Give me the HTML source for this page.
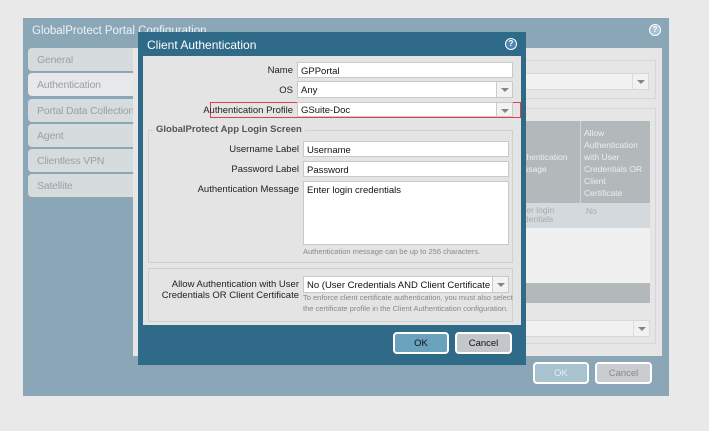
<!DOCTYPE html>
<html><head><style>
*{box-sizing:border-box;margin:0;padding:0}
body{width:709px;height:431px;background:#e9e9e9;position:relative;overflow:hidden;font-family:"Liberation Sans",sans-serif;font-size:9px;color:#222}
.a{position:absolute}
.tab{position:absolute;left:28px;width:106px;height:23px;background:#d6dbde;border-radius:4px 0 0 4px;color:#9aa0a4;font-family:"Liberation Sans",sans-serif;font-size:10.5px;padding:6px 0 0 9px;white-space:nowrap;letter-spacing:-0.2px}
.inp{position:absolute;background:#fff;border:1px solid #c9c9c9;font-size:9.5px;padding:3px 0 0 3px;color:#111;white-space:nowrap;overflow:hidden}
.lbl{position:absolute;text-align:right;font-size:9.5px;color:#222;white-space:nowrap}
.dd{position:absolute;top:0;right:0;width:16px;height:100%;border-left:1px solid #ccc;background:#f2f2f2}
.dd:after{content:"";position:absolute;left:4px;top:6px;border-left:4px solid transparent;border-right:4px solid transparent;border-top:4px solid #7b8890}
.hint{position:absolute;font-size:7.5px;color:#888;line-height:11px;white-space:nowrap}
.btn{position:absolute;height:22px;border:2px solid #fff;border-radius:4px;text-align:center;font-size:9.5px;padding-top:4px}
.help{position:absolute;width:12px;height:12px;border-radius:50%;border:1.5px solid #fff;background:#4d87ad;color:#fff;font-size:8px;font-weight:bold;text-align:center;line-height:9px}
</style></head><body>
<div class="a" style="left:23px;top:18px;width:646px;height:378px;background:#8ba6b6"></div>
<div class="a" style="left:32px;top:25px;color:#eef3f6;font-size:11.5px">GlobalProtect Portal Configuration</div>
<div class="help" style="left:649px;top:24px;background:#a9c1d0">?</div>
<div class="tab" style="top:48px">General</div>
<div class="tab" style="top:73px;background:#e6e8e9;width:108px">Authentication</div>
<div class="tab" style="top:99px">Portal Data Collection</div>
<div class="tab" style="top:124px">Agent</div>
<div class="tab" style="top:149px">Clientless VPN</div>
<div class="tab" style="top:174px">Satellite</div>
<div class="a" style="left:133px;top:48px;width:529px;height:308px;background:#e6e6e6"></div>
<div class="a" style="left:520px;top:60px;width:136px;height:39px;border:1px solid #d6d6d6"></div>
<div class="a" style="left:520px;top:73px;width:129px;height:17px;background:#f1f1f1;border:1px solid #d8d8d8"><div class="dd" style="background:#f1f1f1;border-color:#ddd"></div></div>
<div class="a" style="left:520px;top:108px;width:136px;height:236px;border:1px solid #d6d6d6"></div>
<div class="a" style="left:520px;top:121px;width:130px;height:162px;background:#f0f0f0"></div>
<div class="a" style="left:520px;top:121px;width:130px;height:82px;background:#b3b8bb"></div>
<div class="a" style="left:580px;top:121px;width:1px;height:107px;background:#cfd4d6"></div>
<div class="a" style="left:584px;top:127px;color:#eee;font-size:8.5px;line-height:12px">Allow<br>Authentication<br>with User<br>Credentials OR<br>Client<br>Certificate</div>
<div class="a" style="left:524px;top:151px;color:#eee;font-size:8.5px;line-height:12px">thentication<br>ssage</div>
<div class="a" style="left:520px;top:203px;width:130px;height:25px;background:#d3d9dc"></div>
<div class="a" style="left:524px;top:206px;color:#aaa;font-size:8.5px;line-height:9px">ter login<br>dentials</div>
<div class="a" style="left:586px;top:206px;color:#aaa;font-size:8.5px">No</div>
<div class="a" style="left:520px;top:283px;width:130px;height:20px;background:#b3b8bb"></div>
<div class="a" style="left:520px;top:320px;width:130px;height:17px;background:#f1f1f1;border:1px solid #d8d8d8"><div class="dd" style="background:#f1f1f1;border-color:#ddd"></div></div>
<div class="btn" style="left:533px;top:362px;width:56px;background:#a8c2cf;color:#e8eef2">OK</div>
<div class="btn" style="left:595px;top:362px;width:57px;background:#c9ccd0;color:#888">Cancel</div>

<div class="a" style="left:138px;top:32px;width:388px;height:333px;background:#2f6a88"></div>
<div class="a" style="left:147px;top:38px;color:#fff;font-size:12px">Client Authentication</div>
<div class="help" style="left:505px;top:38px">?</div>
<div class="a" style="left:143px;top:56px;width:378px;height:269px;background:#e4e4e4"></div>

<div class="lbl" style="left:200px;top:65px;width:93px">Name</div>
<div class="inp" style="left:297px;top:62px;width:216px;height:16px">GPPortal</div>
<div class="lbl" style="left:200px;top:85px;width:93px">OS</div>
<div class="inp" style="left:297px;top:81px;width:216px;height:17px">Any<div class="dd"></div></div>
<div class="a" style="left:210px;top:102px;width:311px;height:16px;border:1px solid #e0404a"></div>
<div class="lbl" style="left:200px;top:105px;width:93px">Authentication Profile</div>
<div class="inp" style="left:297px;top:102px;width:216px;height:15px;padding-top:2px">GSuite-Doc<div class="dd" style="height:100%"></div></div>

<div class="a" style="left:148px;top:130px;width:365px;height:133px;border:1px solid #d0d0d0"></div>
<div class="a" style="left:153px;top:124px;background:#e4e4e4;padding:0 3px;color:#555;font-weight:bold;font-size:9.5px">GlobalProtect App Login Screen</div>
<div class="lbl" style="left:190px;top:144px;width:109px">Username Label</div>
<div class="inp" style="left:303px;top:141px;width:206px;height:16px">Username</div>
<div class="lbl" style="left:190px;top:164px;width:109px">Password Label</div>
<div class="inp" style="left:303px;top:161px;width:206px;height:16px">Password</div>
<div class="lbl" style="left:190px;top:184px;width:109px">Authentication Message</div>
<div class="inp" style="left:303px;top:181px;width:206px;height:64px">Enter login credentials</div>
<div class="hint" style="left:303px;top:246px">Authentication message can be up to 256 characters.</div>

<div class="a" style="left:148px;top:268px;width:365px;height:54px;border:1px solid #d0d0d0"></div>
<div class="lbl" style="left:150px;top:279px;width:149px;line-height:11px">Allow Authentication with User<br>Credentials OR Client Certificate</div>
<div class="inp" style="left:303px;top:276px;width:206px;height:17px">No (User Credentials AND Client Certificate Re<div class="dd"></div></div>
<div class="hint" style="left:303px;top:292px">To enforce client certificate authentication, you must also select<br>the certificate profile in the Client Authentication configuration.</div>

<div class="btn" style="left:393px;top:332px;width:56px;background:#6aa1bd;color:#111">OK</div>
<div class="btn" style="left:455px;top:332px;width:57px;background:#c3c6cb;color:#111">Cancel</div>
</body></html>
